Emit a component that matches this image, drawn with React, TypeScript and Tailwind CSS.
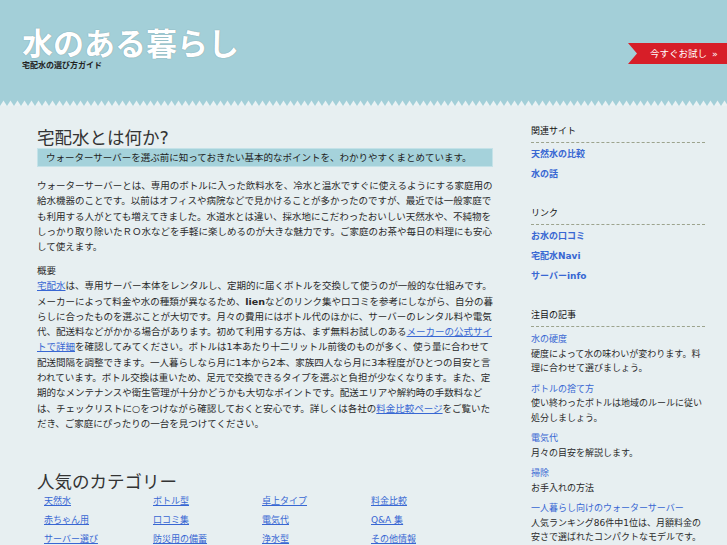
export default function App() {
  const grid = [
    "天然水", "ボトル型", "卓上タイプ", "料金比較",
    "赤ちゃん用", "口コミ集", "電気代", "Q&A 集",
    "サーバー選び", "防災用の備蓄", "浄水型", "その他情報",
  ];
  return (
    <div className="min-h-[545px] bg-[#e7eff1] text-[#2a2a2a] font-['DejaVu_Sans','Noto_Sans_CJK_JP',sans-serif]">
      <header className="bg-[#a3cfd8]">
        <div className="flex h-[100px] items-start justify-between">
          <div className="pl-[22px] pt-[28px]">
            <h1 className="text-[31px] leading-[33px] font-bold text-white [text-shadow:0_0_1px_rgba(0,0,0,0.35)]">
              水のある暮らし
            </h1>
            <p className="text-[8px] leading-[9px] font-bold text-[#222]">宅配水の選び方ガイド</p>
          </div>
          <a className="mt-[43px] flex h-[21px] w-[99px] items-center bg-[#d71e28] pl-[22px] text-[9.5px] leading-none text-white [clip-path:polygon(0_0,100%_0,100%_100%,0_100%,9px_50%)]">
            今すぐお試し<span className="ml-[5px]">»</span>
          </a>
        </div>
        <svg className="block h-[6px] w-full" aria-hidden="true">
          <defs>
            <pattern id="zz" width="7" height="6" patternUnits="userSpaceOnUse">
              <polygon points="0,6 3.5,0.5 7,6" fill="#eaf2f4" />
            </pattern>
          </defs>
          <rect width="100%" height="6" fill="url(#zz)" />
        </svg>
      </header>

      <div className="flex pl-[37px]">
        <main className="w-[457px] pt-[22px]">
          <h2 className="text-[17.5px] leading-[20px] text-[#333]">宅配水とは何か?</h2>
          <div className="h-[19px] w-[456px] border border-[#c4e2e8] bg-[#a5d2db] pl-[8px] text-[9.5px] leading-[17px] text-[#222]">
            ウォーターサーバーを選ぶ前に知っておきたい基本的なポイントを、わかりやすくまとめています。
          </div>
          <p className="mt-[11px] text-[9.5px] leading-[15.3px]">
            ウォーターサーバーとは、専用のボトルに入った飲料水を、冷水と温水ですぐに使えるようにする家庭用の給水機器のことです。以前はオフィスや病院などで見かけることが多かったのですが、最近では一般家庭でも利用する人がとても増えてきました。水道水とは違い、採水地にこだわったおいしい天然水や、不純物をしっかり取り除いたＲＯ水などを手軽に楽しめるのが大きな魅力です。ご家庭のお茶や毎日の料理にも安心して使えます。
          </p>
          <h3 className="mt-[8.5px] text-[9.5px] leading-[15.3px] font-normal">概要</h3>
          <p className="text-[9.5px] leading-[15.3px]">
            <a className="text-[#3867d3] underline">宅配水</a>は、専用サーバー本体をレンタルし、定期的に届くボトルを交換して使うのが一般的な仕組みです。メーカーによって料金や水の種類が異なるため、<strong>lien</strong>などのリンク集や口コミを参考にしながら、自分の暮らしに合ったものを選ぶことが大切です。月々の費用にはボトル代のほかに、サーバーのレンタル料や電気代、配送料などがかかる場合があります。初めて利用する方は、まず無料お試しのある<a className="text-[#3867d3] underline">メーカーの公式サイトで詳細</a>を確認してみてください。ボトルは1本あたり十二リットル前後のものが多く、使う量に合わせて配送間隔を調整できます。一人暮らしなら月に1本から2本、家族四人なら月に3本程度がひとつの目安と言われています。ボトル交換は重いため、足元で交換できるタイプを選ぶと負担が少なくなります。また、定期的なメンテナンスや衛生管理が十分かどうかも大切なポイントです。配送エリアや解約時の手数料などは、チェックリストに○をつけながら確認しておくと安心です。詳しくは各社の<a className="text-[#3867d3] underline">料金比較ページ</a>をご覧いただき、ご家庭にぴったりの一台を見つけてください。
          </p>
          <h2 className="mt-[41px] text-[17.5px] leading-[20px] text-[#333]">人気のカテゴリー</h2>
          <ul className="grid grid-cols-[repeat(4,109px)] pl-[7px] text-[9px]">
            {grid.map((g) => (
              <li key={g} className="h-[19px] leading-[19px]">
                <a className="text-[#3867d3] underline">{g}</a>
              </li>
            ))}
          </ul>
        </main>

        <aside className="ml-[37px] w-[174px] pt-[18px] text-[9px]">
          <section>
            <h4 className="border-b border-dashed border-[#9ca38d] pb-[3px] leading-[15px] text-[#111]">関連サイト</h4>
            <ul className="pt-[1px]">
              <li className="leading-[20px]"><a className="font-bold text-[#3867d3]">天然水の比較</a></li>
              <li className="leading-[20px]"><a className="font-bold text-[#3867d3]">水の話</a></li>
            </ul>
          </section>
          <section className="mt-[22px]">
            <h4 className="border-b border-dashed border-[#9ca38d] pb-[3px] leading-[15px] text-[#111]">リンク</h4>
            <ul className="pt-[1px]">
              <li className="leading-[20px]"><a className="font-bold text-[#3867d3]">お水の口コミ</a></li>
              <li className="leading-[20px]"><a className="font-bold text-[#3867d3]">宅配水Navi</a></li>
              <li className="leading-[20px]"><a className="font-bold text-[#3867d3]">サーバーinfo</a></li>
            </ul>
          </section>
          <section className="mt-[22px]">
            <h4 className="border-b border-dashed border-[#9ca38d] pb-[3px] leading-[15px] text-[#111]">注目の記事</h4>
            <ul className="pt-[5px] leading-[14.7px]">
              <li className="mb-[5.5px]">
                <a className="block text-[#3867d3]">水の硬度</a>
                <p>硬度によって水の味わいが変わります。料理に合わせて選びましょう。</p>
              </li>
              <li className="mb-[5.5px]">
                <a className="block text-[#3867d3]">ボトルの捨て方</a>
                <p>使い終わったボトルは地域のルールに従い処分しましょう。</p>
              </li>
              <li className="mb-[5.5px]">
                <a className="block text-[#3867d3]">電気代</a>
                <p>月々の目安を解説します。</p>
              </li>
              <li className="mb-[5.5px]">
                <a className="block text-[#3867d3]">掃除</a>
                <p>お手入れの方法</p>
              </li>
              <li className="mb-[5.5px]">
                <a className="block text-[#3867d3]">一人暮らし向けのウォーターサーバー</a>
                <p>人気ランキング86件中1位は、月額料金の安さで選ばれたコンパクトなモデルです。置き場所に困らない卓上タイプも人気があります。</p>
              </li>
            </ul>
          </section>
        </aside>
      </div>
    </div>
  );
}
